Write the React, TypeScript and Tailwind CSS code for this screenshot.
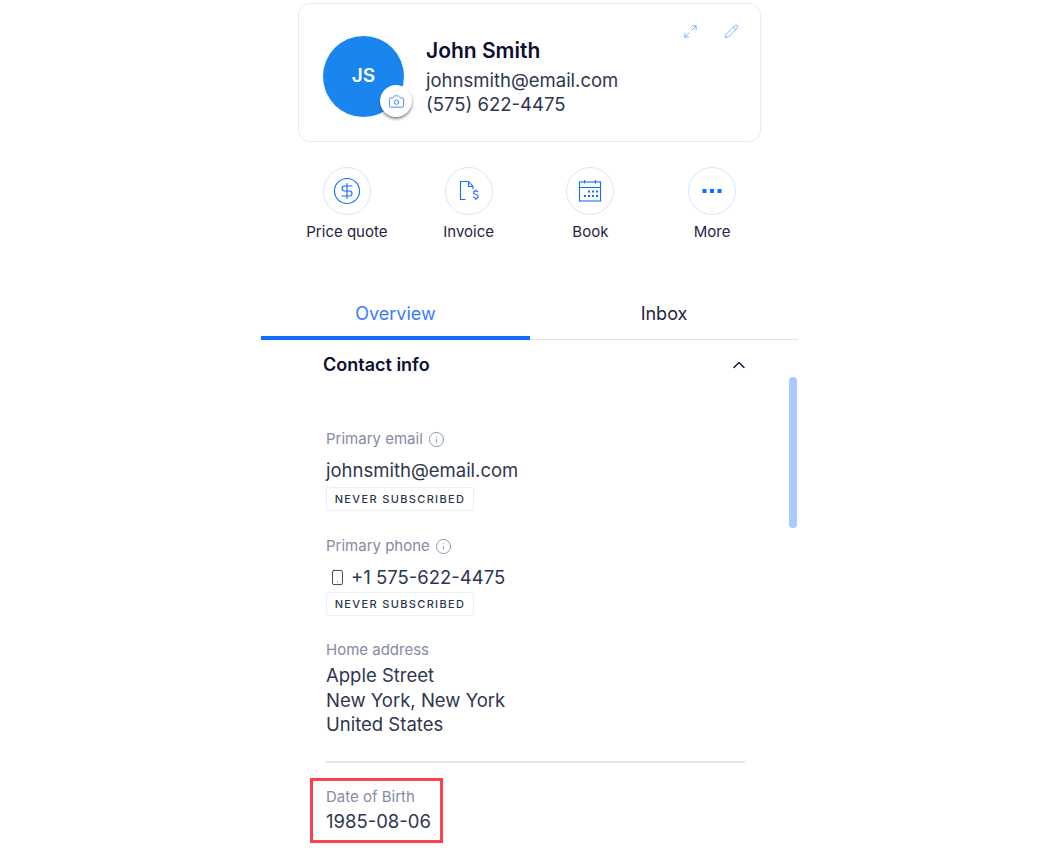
import React from "react";
import { Camera, ChevronUp, CircleDollarSign, Info, Maximize2, Pencil, Smartphone } from "lucide-react";

const InvoiceIcon = () => (
  <svg width="24" height="24" viewBox="0 0 24 24" fill="none" stroke="#116dff" strokeWidth="1.1">
    <path d="M8.5 20.5H3.5V2.5H11.5L16 7.5V10" />
    <path d="M11.5 2.5V7.5H16" />
    <path d="M21 13.2c-.4-.9-1.2-1.3-2.2-1.3-1.3 0-2.2.7-2.2 1.8 0 2.4 4.6 1.2 4.6 3.7 0 1.1-1 1.8-2.4 1.8-1.1 0-2-.5-2.4-1.4M18.8 10.4v1.5M18.8 19.5v1.6" />
  </svg>
);

const CalendarIcon = () => (
  <svg width="24" height="24" viewBox="0 0 24 24" fill="none" stroke="#116dff" strokeWidth="1.1">
    <rect x="1.5" y="3" width="21" height="19" />
    <path d="M1.5 8.5H22.5M6.5 1V4.5M17.5 1V4.5" />
    <path fill="#116dff" stroke="none" d="M10 11.5h2v2h-2zM14 11.5h2v2h-2zM18 11.5h2v2h-2zM6 16h2v2H6zM10 16h2v2h-2zM14 16h2v2h-2zM18 16h2v2h-2z" />
  </svg>
);

const DotsIcon = () => (
  <svg width="20" height="6" viewBox="0 0 20 6" fill="#116dff">
    <rect x="0.5" y="1" width="4" height="4" />
    <rect x="8" y="1" width="4" height="4" />
    <rect x="15.5" y="1" width="4" height="4" />
  </svg>
);

const actions = [
  { label: "Price quote", icon: <CircleDollarSign size={30} strokeWidth={0.9} color="#116dff" /> },
  { label: "Invoice", icon: <InvoiceIcon /> },
  { label: "Book", icon: <CalendarIcon /> },
  { label: "More", icon: <DotsIcon /> },
];

const Badge = () => (
  <div className="flex h-6 w-[148px] items-center justify-center rounded-[2px] border border-[#eceff3] text-[11px] font-medium tracking-[1.35px] text-[#2f3650]">
    NEVER SUBSCRIBED
  </div>
);

const Label = ({ children, info }: { children: React.ReactNode; info?: boolean }) => (
  <div className="flex h-5 items-center gap-[5px] text-[15px] leading-5 text-[#868aa5]">
    {children}
    {info && <Info size={17} strokeWidth={1.2} color="#7a8aa8" />}
  </div>
);

export default function App() {
  return (
    <div className="h-[850px] w-[1053px] overflow-hidden bg-white font-['Inter',sans-serif] text-[#2f3650]">
      <div className="relative ml-[261px] w-[537px]">
        {/* Profile card */}
        <div className="mx-[37px] mt-[3px] flex h-[139px] items-start rounded-xl border border-[#e8ebf0] pl-6 pt-8">
          <div className="relative flex h-[81px] w-[81px] shrink-0 items-center justify-center rounded-full bg-[#1a85ee] text-[19px] font-semibold text-white">
            JS
            <div className="absolute left-[57px] top-[49px] flex h-8 w-8 items-center justify-center rounded-full bg-white shadow-[0_2px_3px_rgba(22,45,61,0.55)]">
              <Camera size={17} strokeWidth={1.1} color="#116dff" />
            </div>
          </div>
          <div className="ml-[22px] flex flex-col">
            <div className="mt-px text-[21px] font-semibold leading-7 text-[#0b1030]">John Smith</div>
            <div className="mt-[3px] text-[18.5px] leading-[24px]">johnsmith@email.com</div>
            <div className="text-[18.5px] leading-[24px]">(575) 622-4475</div>
          </div>
          <div className="ml-auto mr-[21px] mt-[-12px] flex items-center gap-[26px]">
            <Maximize2 size={15} strokeWidth={1.2} color="#116dff" className="opacity-70" />
            <Pencil size={15} strokeWidth={1.2} color="#116dff" className="opacity-70" />
          </div>
        </div>

        {/* Quick actions */}
        <div className="ml-[25px] mt-[25px] grid w-[487px] grid-cols-4">
          {actions.map((a) => (
            <div key={a.label} className="flex flex-col items-center">
              <div className="flex h-12 w-12 items-center justify-center rounded-full border border-[#d6e6fe]">{a.icon}</div>
              <div className="mt-[7px] text-[15px] leading-5 text-[#1f2440]">{a.label}</div>
            </div>
          ))}
        </div>

        {/* Tabs */}
        <div className="mt-[49px] flex h-[49px] border-b border-[#dfe5eb]">
          <div className="flex h-[49px] w-[269px] items-start justify-center border-b-4 border-[#116dff] pt-[11px] text-[18px] leading-6 text-[#3b7cff]">Overview</div>
          <div className="flex flex-1 items-start justify-center pt-[11px] text-[18px] leading-6 text-[#1f2440]">Inbox</div>
        </div>

        {/* Scrollbar thumb */}
        <div className="absolute left-[528px] top-[374px] h-[151px] w-2 rounded-full bg-[#a8caff]" />

        {/* Contact info */}
        <div className="mt-[13px] flex h-6 items-center justify-between pl-[62px] pr-[49px]">
          <div className="text-[18px] font-semibold leading-6 text-[#0b1030]">Contact info</div>
          <ChevronUp size={20} strokeWidth={1.6} color="#0b1030" />
        </div>

        <div className="ml-[65px] mt-[52px] w-[419px]">
          <Label info>Primary email</Label>
          <div className="mt-[9px] text-[18.5px] leading-6">johnsmith@email.com</div>
          <div className="mt-[5px]"><Badge /></div>

          <div className="mt-[25px]"><Label info>Primary phone</Label></div>
          <div className="mt-[9px] flex h-6 items-center text-[18.5px] leading-6">
            <Smartphone size={17} strokeWidth={1.3} color="#2f3650" className="ml-[3px] mr-[5px]" />
            +1 575-622-4475
          </div>
          <div className="mt-[3px]"><Badge /></div>

          <div className="mt-[24px]"><Label>Home address</Label></div>
          <div className="mt-[3px] text-[18.5px] leading-[24.5px]">
            Apple Street
            <br />
            New York, New York
            <br />
            United States
          </div>

          <div className="mt-[24px] h-[2px] bg-[#dfe5eb]" />

          {/* Highlighted field */}
          <div className="ml-[-16px] mt-[15px] h-[65px] w-[133px] border-[3px] border-[#ff4048] pl-[13px] pt-[6px]">
            <Label>Date of Birth</Label>
            <div className="mt-[2px] text-[18.5px] leading-6">1985-08-06</div>
          </div>
        </div>
      </div>
    </div>
  );
}
